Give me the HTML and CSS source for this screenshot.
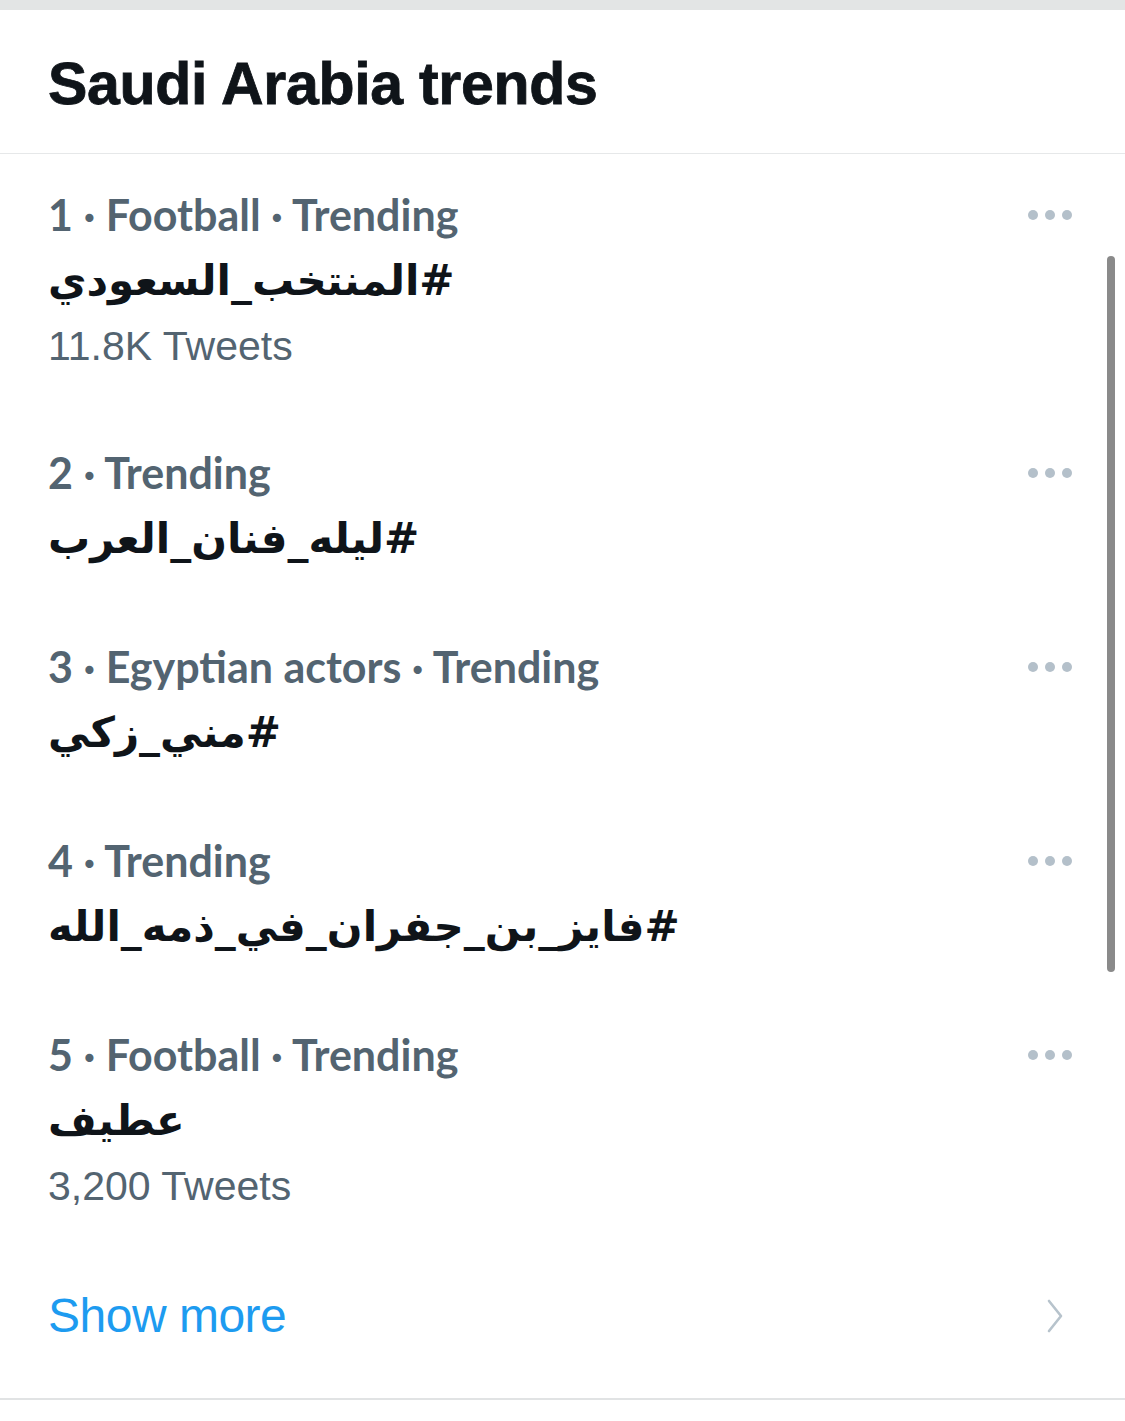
FILE: index.html
```
<!DOCTYPE html>
<html>
<head>
<meta charset="utf-8">
<link rel="stylesheet" href="styles.css">
</head>
<body>
<div class="topstrip"></div>
<header class="header"><h1 class="title">Saudi Arabia trends</h1></header>
<main class="list">
  <div class="trend">
    <div class="info">
      <div class="meta">1 · Football · Trending</div>
      <div class="tag" dir="rtl">#المنتخب_السعودي</div>
      <div class="count">11.8K Tweets</div>
    </div>
    <div class="more"><span></span><span></span><span></span></div>
  </div>
  <div class="trend">
    <div class="info">
      <div class="meta">2 · Trending</div>
      <div class="tag" dir="rtl">#ليله_فنان_العرب</div>
    </div>
    <div class="more"><span></span><span></span><span></span></div>
  </div>
  <div class="trend">
    <div class="info">
      <div class="meta">3 · Egyptian actors · Trending</div>
      <div class="tag" dir="rtl">#مني_زكي</div>
    </div>
    <div class="more"><span></span><span></span><span></span></div>
  </div>
  <div class="trend">
    <div class="info">
      <div class="meta">4 · Trending</div>
      <div class="tag" dir="rtl">#فايز_بن_جفران_في_ذمه_الله</div>
    </div>
    <div class="more"><span></span><span></span><span></span></div>
  </div>
  <div class="trend">
    <div class="info">
      <div class="meta">5 · Football · Trending</div>
      <div class="tag" dir="rtl">عطيف</div>
      <div class="count">3,200 Tweets</div>
    </div>
    <div class="more"><span></span><span></span><span></span></div>
  </div>
  <div class="scrollbar"></div>
</main>
<footer class="showmore">
  <span class="showmore-text">Show more</span>
  <svg class="chevron" width="20" height="36" viewBox="0 0 20 36"><path d="M4 3 L16 18 L4 33" fill="none" stroke="#b7c3cc" stroke-width="2.6" stroke-linecap="round" stroke-linejoin="round"/></svg>
</footer>
</body>
</html>
```
FILE: styles.css
```
html, body {
  margin: 0;
  padding: 0;
  background: #ffffff;
}
body {
  width: 1125px;
  font-family: "Lato", "Liberation Sans", sans-serif;
  color: #0f1419;
}
.topstrip {
  height: 10px;
  background: #e3e5e5;
}
.header {
  height: 144px;
  border-bottom: 1px solid #e6e8e9;
  display: flex;
  align-items: center;
  padding-left: 48px;
  box-sizing: border-box;
}
.title {
  margin: 0;
  font-family: "Liberation Sans", sans-serif;
  font-weight: 700;
  font-size: 59px;
  letter-spacing: -0.3px;
  color: #0f1419;
  -webkit-text-stroke: 0.8px #0f1419;
  transform: translateY(2px);
}
.list {
  position: relative;
}
.trend {
  display: flex;
  justify-content: space-between;
  align-items: flex-start;
  padding: 28px 53px 34px 48px;
}
.meta {
  height: 66px;
  line-height: 66px;
  font-size: 43px;
  font-weight: 700;
  color: #536471;
  white-space: nowrap;
}
.tag {
  height: 66px;
  line-height: 66px;
  font-family: "DejaVu Sans", sans-serif;
  font-weight: 700;
  font-size: 42px;
  color: #0f1419;
  text-align: right;
  white-space: nowrap;
}
.info {
  display: flex;
  flex-direction: column;
  align-items: flex-start;
}
.count {
  height: 64px;
  line-height: 64px;
  font-family: "Liberation Sans", sans-serif;
  font-size: 41px;
  color: #536471;
}
.more {
  display: flex;
  gap: 7px;
  height: 66px;
  align-items: center;
}
.more span {
  width: 10px;
  height: 10px;
  border-radius: 50%;
  background: #b4c0ca;
}
.scrollbar {
  position: absolute;
  left: 1107px;
  top: 102px;
  width: 8px;
  height: 716px;
  border-radius: 4px;
  background: #8a8a8a;
}
.showmore {
  height: 148px;
  box-sizing: border-box;
  border-bottom: 2px solid #e1e3e4;
  display: flex;
  justify-content: space-between;
  align-items: flex-start;
  padding: 30px 60px 0 48px;
}
.showmore-text {
  line-height: 68px;
  font-family: "Liberation Sans", sans-serif;
  font-size: 48px;
  color: #1d9bf0;
  letter-spacing: -0.5px;
}
.chevron {
  margin-top: 16px;
}
```
